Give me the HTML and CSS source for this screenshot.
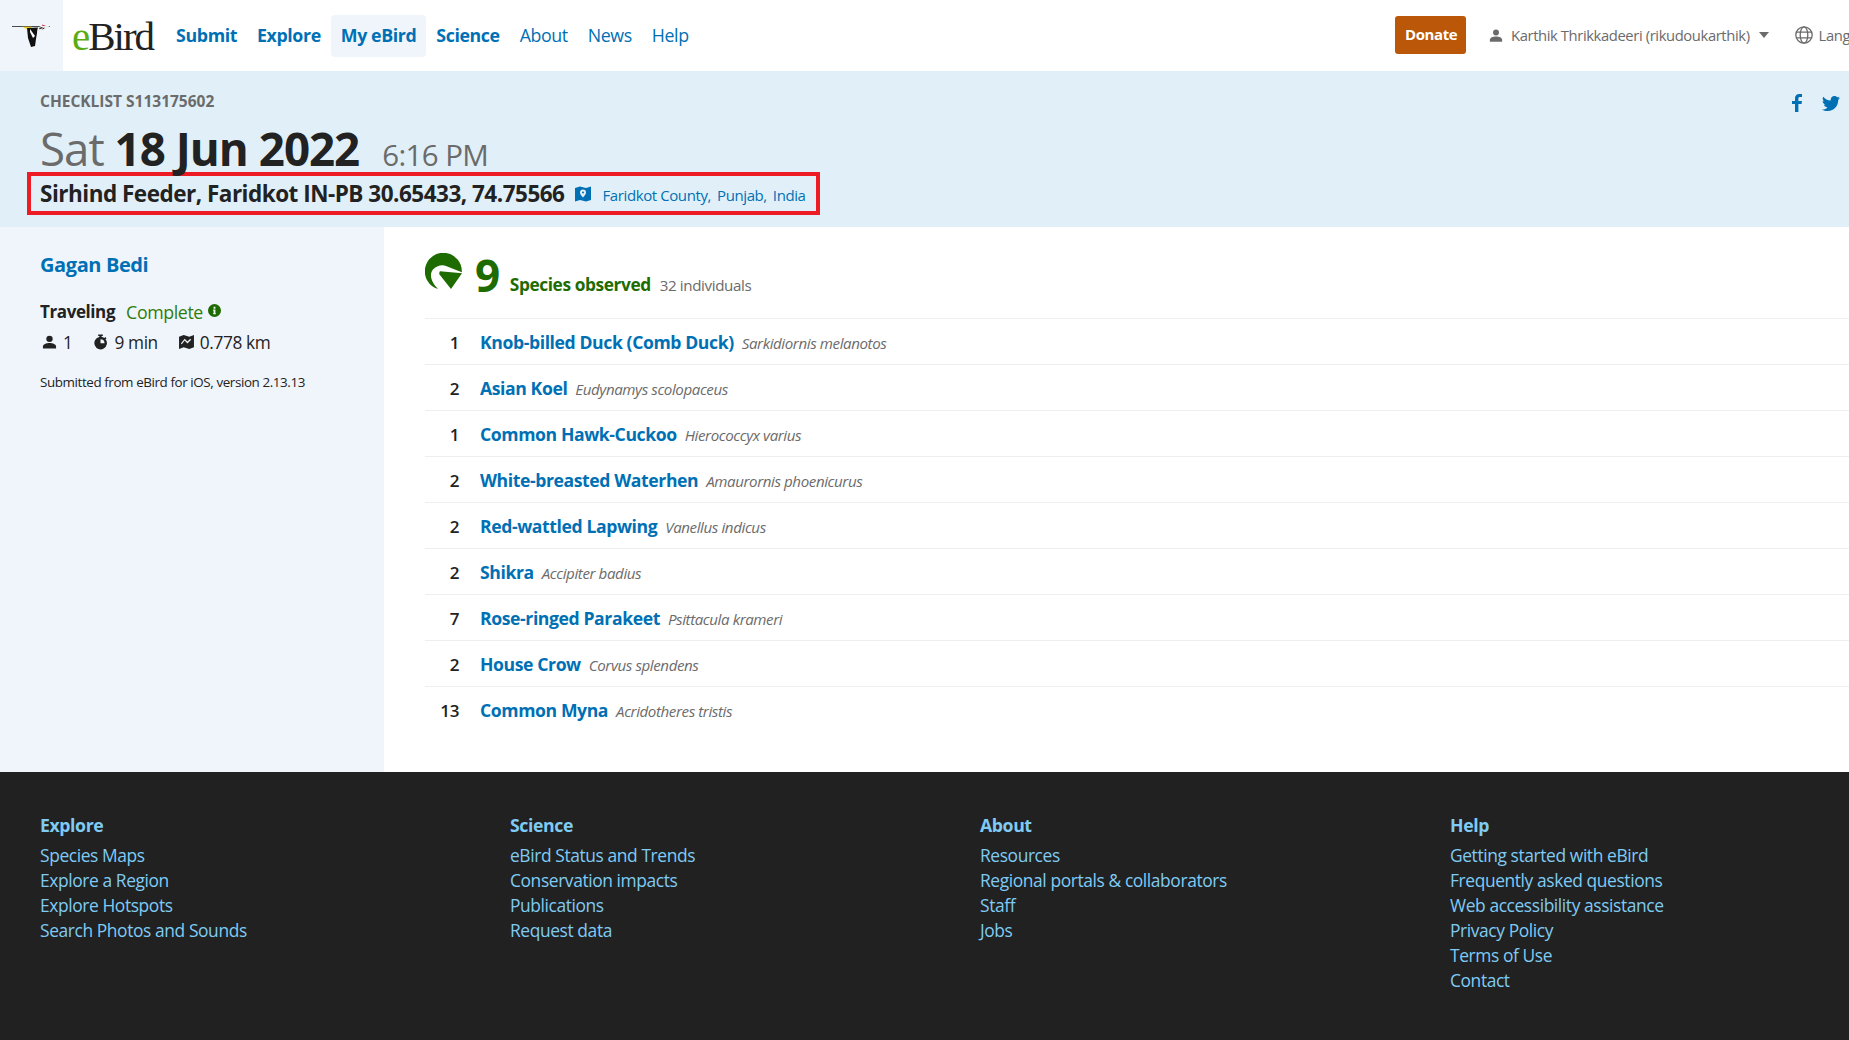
FILE: index.html
```html
<!DOCTYPE html>
<html lang="en">
<head>
    <meta charset="UTF-8">
    <meta name="viewport" content="width=device-width, initial-scale=1.0">
    <title>eBird Checklist - 18 Jun 2022 - Sirhind Feeder, Faridkot IN-PB</title>
    <link rel="stylesheet" href="styles.css">
</head>
<body>
    <header class="topbar">
        <a class="bird-box" href="#">
            <svg width="40" height="24" viewBox="0 0 40 24">
                <path d="M0 2h38v.8H0z" fill="#111"/>
                <path d="M10 2.800h10l-3 3.500z" fill="#f2cf1d"/>
                <path d="M15 4l11-.5L24 15l-1 7-4 1-3-9z" fill="#111"/>
                <path d="M18 5l5 7-2 2-3-6z" fill="#fff"/>
                <path d="M26 3.500L31 1l7 1.500-8 3.500-5 3z" fill="#eee"/>
                <path d="M27 4l3-1 .8 1-3 1.200zM30 5l2-1.500.8.500-2 1.500z" fill="#222"/>
                <path d="M30 .4l4 1.600-3.500 0z" fill="#c8202a"/>
            </svg>
        </a>
        <a class="wordmark" href="#"><span class="wordmark-e">e</span>Bird</a>
        <nav class="mainnav">
            <a class="strong" href="#">Submit</a>
            <a class="strong" href="#">Explore</a>
            <a class="strong current" href="#">My eBird</a>
            <a class="strong" href="#">Science</a>
            <a href="#">About</a>
            <a href="#">News</a>
            <a href="#">Help</a>
        </nav>
        <div class="usernav">
            <a class="donate" href="#">Donate</a>
            <a class="user" href="#">
                <svg class="ico-user" viewBox="0 0 16 14"><circle cx="8" cy="3.6" r="3.4"/><path d="M1 14v-2.2C1 9.4 4.4 8 8 8s7 1.4 7 3.8V14z"/></svg>
                Karthik Thrikkadeeri (rikudoukarthik)
                <svg class="ico-caret" viewBox="0 0 10 6"><path d="M0 0h10L5 6z"/></svg>
            </a>
            <a class="lang" href="#">
                <svg class="ico-globe" viewBox="0 0 18 18"><circle cx="9" cy="9" r="8.2"/><ellipse cx="9" cy="9" rx="3.8" ry="8.2"/><path d="M1.2 6.2h15.6M1.2 11.8h15.6"/></svg>
                Language
            </a>
        </div>
    </header>

    <section class="hero">
        <div class="share">
            <a href="#"><svg width="10" height="18" viewBox="0 0 10 18"><path d="M3 18V10H0V7h3V4.500C3 1.600 4.600 0 7.200 0H10v3H8c-1.100 0-1.600.5-1.600 1.600V7H10l-.5 3H6.400v8z"/></svg></a>
            <a href="#"><svg width="18" height="15" viewBox="0 0 18 15"><path d="M18 1.800c-.7.300-1.400.5-2.100.6.800-.5 1.300-1.200 1.600-2-.7.400-1.500.7-2.300.9C14.500.5 13.500 0 12.400 0 10.400 0 8.700 1.700 8.700 3.700c0 .3 0 .6.100.8C5.700 4.400 3 2.900 1.200.7.900 1.200.7 1.900.7 2.600c0 1.300.7 2.400 1.600 3-.6 0-1.200-.2-1.700-.5 0 1.800 1.300 3.300 3 3.600-.6.200-1.100.2-1.700.1.500 1.500 1.800 2.500 3.500 2.600C4 12.900 2.400 13.500.6 13.500H0C1.600 14.500 3.600 15 5.700 15c6.800 0 10.500-5.600 10.500-10.500v-.5c.7-.5 1.300-1.200 1.800-2.200z"/></svg></a>
        </div>
        <div class="checklist-id">Checklist S113175602</div>
        <h1 class="date">Sat <strong>18 Jun 2022</strong> <span class="time">6:16 PM</span></h1>
        <div class="location">
            <span class="location-name">Sirhind Feeder, Faridkot IN-PB 30.65433, 74.75566</span>
            <svg class="ico-map" viewBox="0 0 16 15"><path fill-rule="evenodd" d="M0 1.500L5 0l6 1.500L16 0v13.500L11 15l-6-1.500L0 15zM8 3a3 3 0 0 0-3 3c0 2 3 5 3 5s3-3 3-5a3 3 0 0 0-3-3zm0 2a1 1 0 1 1 0 2 1 1 0 0 1 0-2z"/></svg>
            <span class="regions"><a href="#">Faridkot County,</a><a href="#">Punjab,</a><a href="#">India</a></span>
        </div>
    </section>

    <div class="content">
        <aside class="sidebar">
            <a class="observer" href="#">Gagan Bedi</a>
            <div class="protocol"><strong>Traveling</strong><span class="complete">Complete</span>
                <svg class="ico-info" viewBox="0 0 14 14"><path fill-rule="evenodd" d="M7 0a7 7 0 1 1 0 14A7 7 0 0 1 7 0zM6 3v2h2V3zM5.500 6v1.300H6v2.700h-.5V11h3V10H8V6z"/></svg>
            </div>
            <div class="stats">
                <span><svg class="ico-stat" viewBox="0 0 16 14"><circle cx="8" cy="3.600" r="3.400"/><path d="M1 14v-2.200C1 9.400 4.400 8 8 8s7 1.400 7 3.800V14z"/></svg>1</span>
                <span><svg class="ico-stat ico-watch" viewBox="0 0 16 16"><path fill-rule="evenodd" d="M5.500 0h5v1.500H9.200v1.100a6.700 6.700 0 0 1 2.900 1.100l1-1 1.300 1.300-1 1A6.700 6.700 0 1 1 6.800 2.600V1.500H5.500zM8 5v4.300h4.300A4.300 4.300 0 0 0 8 5z"/></svg>9 min</span>
                <span><svg class="ico-stat" viewBox="0 0 16 15"><path fill-rule="evenodd" d="M0 2l5-2 6 2 5-2v13l-5 2-6-2-5 2zM3 10l3-4 3 3 4-4-1-1-3 3-3-3-4 5z"/></svg>0.778 km</span>
            </div>
            <p class="submitted">Submitted from eBird for iOS, version 2.13.13</p>
        </aside>

        <main class="observations">
            <div class="summary">
                <svg class="ico-species" viewBox="0 0 37 37">
                    <path d="M36.800 19.300A18.500 18.500 0 1 0 13 36C7 30 3.500 22 8 16.500 11 13 17 11 21 13z"/>
                    <path d="M15 18.300l22 2-11 15.700-11.500-14.500c-.5-1.500 0-2.500.5-3.200z"/>
                </svg>
                <span class="species-count">9</span>
                <span class="species-label">Species observed</span>
                <span class="individuals">32 individuals</span>
            </div>
            <ol class="species-list">
                <li><span class="count">1</span><a href="#">Knob-billed Duck (Comb Duck)</a><em>Sarkidiornis melanotos</em></li>
                <li><span class="count">2</span><a href="#">Asian Koel</a><em>Eudynamys scolopaceus</em></li>
                <li><span class="count">1</span><a href="#">Common Hawk-Cuckoo</a><em>Hierococcyx varius</em></li>
                <li><span class="count">2</span><a href="#">White-breasted Waterhen</a><em>Amaurornis phoenicurus</em></li>
                <li><span class="count">2</span><a href="#">Red-wattled Lapwing</a><em>Vanellus indicus</em></li>
                <li><span class="count">2</span><a href="#">Shikra</a><em>Accipiter badius</em></li>
                <li><span class="count">7</span><a href="#">Rose-ringed Parakeet</a><em>Psittacula krameri</em></li>
                <li><span class="count">2</span><a href="#">House Crow</a><em>Corvus splendens</em></li>
                <li><span class="count">13</span><a href="#">Common Myna</a><em>Acridotheres tristis</em></li>
            </ol>
        </main>
    </div>

    <footer class="footer">
        <div class="footer-col">
            <h3>Explore</h3>
            <a href="#">Species Maps</a>
            <a href="#">Explore a Region</a>
            <a href="#">Explore Hotspots</a>
            <a href="#">Search Photos and Sounds</a>
        </div>
        <div class="footer-col">
            <h3>Science</h3>
            <a href="#">eBird Status and Trends</a>
            <a href="#">Conservation impacts</a>
            <a href="#">Publications</a>
            <a href="#">Request data</a>
        </div>
        <div class="footer-col">
            <h3>About</h3>
            <a href="#">Resources</a>
            <a href="#">Regional portals &amp; collaborators</a>
            <a href="#">Staff</a>
            <a href="#">Jobs</a>
        </div>
        <div class="footer-col">
            <h3>Help</h3>
            <a href="#">Getting started with eBird</a>
            <a href="#">Frequently asked questions</a>
            <a href="#">Web accessibility assistance</a>
            <a href="#">Privacy Policy</a>
            <a href="#">Terms of Use</a>
            <a href="#">Contact</a>
        </div>
    </footer>
</body>
</html>
```

FILE: styles.css
```css
* {
    box-sizing: border-box;
}

html,
body {
    margin: 0;
    padding: 0;
    height: 1040px;
    overflow: hidden;
}

body {
    font-family: "Open Sans", "Noto Sans", sans-serif;
    font-size: 17px;
    letter-spacing: -0.4px;
    color: #222;
    background-color: #fff;
}

a {
    text-decoration: none;
    color: #0070b5;
}

/* top bar */
.topbar {
    display: flex;
    align-items: center;
    height: 71px;
    background-color: #fff;
}

.bird-box {
    display: flex;
    align-items: center;
    justify-content: center;
    width: 63px;
    height: 71px;
    background-color: #f0f5fb;
}

.wordmark {
    margin-left: 9px;
    font-family: "Liberation Serif", serif;
    font-size: 41px;
    letter-spacing: -2px;
    color: #222;
}

.wordmark-e {
    color: #5aab12;
}

.mainnav {
    display: flex;
    align-items: center;
    margin-left: 13px;
    height: 42px;
    font-size: 17.8px;
}

.mainnav a {
    display: flex;
    align-items: center;
    height: 42px;
    padding: 0 10px 2px;
    border-radius: 4px;
}

.mainnav .strong {
    font-weight: 700;
}

.mainnav .current {
    background-color: #f0f5fb;
}

.usernav {
    display: flex;
    align-items: center;
    margin-left: auto;
    margin-top: -1px;
    white-space: nowrap;
    overflow: hidden;
    width: 454px;
}

.donate {
    padding: 0 10px;
    height: 38px;
    line-height: 37px;
    width: 71px;
    text-align: center;
    border-radius: 3px;
    background-color: #bb5708;
    color: #fff;
    font-size: 15px;
    font-weight: 700;
}

.user,
.lang {
    display: flex;
    align-items: center;
    color: #6b6b6b;
    font-size: 14.8px;
}

.user {
    margin-left: 23px;
}

.ico-user {
    width: 14px;
    height: 13px;
    margin-right: 8px;
    fill: #6b6b6b;
}

.ico-caret {
    width: 10px;
    height: 6px;
    margin-left: 9px;
    fill: #6b6b6b;
}

.lang {
    margin-left: 26px;
}

.ico-globe {
    width: 18px;
    height: 18px;
    margin-right: 6px;
    fill: none;
    stroke: #6b6b6b;
    stroke-width: 1.300;
}

/* blue band */
.hero {
    position: relative;
    height: 156px;
    padding: 20px 0 0 40px;
    background-color: #e1f0f8;
}

.share {
    position: absolute;
    top: 23px;
    right: 9px;
    display: flex;
    align-items: center;
    gap: 20px;
}

.share svg {
    display: block;
    fill: #0070b5;
}

.checklist-id {
    font-size: 15.5px;
    line-height: 20px;
    font-weight: 700;
    letter-spacing: 0;
    color: #6b6b6b;
    text-transform: uppercase;
}

.date {
    margin: 14px 0 0;
    font-size: 45.7px;
    line-height: 46px;
    font-weight: 400;
    letter-spacing: -1px;
    color: #6b6b6b;
    white-space: nowrap;
}

.date strong {
    font-weight: 700;
    color: #222;
}

.time {
    margin-left: 12px;
    font-size: 29.5px;
    line-height: 1;
    letter-spacing: -0.6px;
}

/* the red box round the location */
.location {
    display: flex;
    align-items: center;
    width: 793px;
    height: 43px;
    margin: 1px 0 0 -13px;
    padding-left: 9px;
    border: 4px solid #ed1c24;
}

.location-name {
    font-size: 22.5px;
    font-weight: 700;
    letter-spacing: -0.5px;
    color: #222;
}

.ico-map {
    width: 16px;
    height: 16px;
    margin-left: 11px;
    fill: #0070b5;
}

.regions {
    display: flex;
    gap: 6px;
    margin-left: 11px;
    padding-top: 3px;
    font-size: 15px;
}

/* middle */
.content {
    display: flex;
    height: 545px;
}

.sidebar {
    width: 384px;
    padding: 24px 0 0 40px;
    background-color: #f0f5fb;
}

.observer {
    display: block;
    font-size: 20px;
    line-height: 27px;
    font-weight: 700;
}

.protocol {
    display: flex;
    align-items: center;
    margin-top: 21px;
    line-height: 26px;
}

.protocol strong {
    font-weight: 700;
}

.complete {
    margin-left: 11px;
    font-size: 17.8px;
    color: #2f7d0c;
}

.ico-info {
    width: 13px;
    height: 13px;
    margin: -3px 0 0 5px;
    fill: #1e6b00;
}

.stats {
    display: flex;
    gap: 19px;
    margin-top: 5px;
    font-size: 17.3px;
    line-height: 26px;
}

.stats span {
    display: flex;
    align-items: center;
}

.ico-stat {
    width: 15px;
    height: 14px;
    margin: -2px 6px 0 2px;
    fill: #222;
}

.ico-watch {
    height: 16px;
}

.submitted {
    margin: 17px 0 0;
    font-size: 13.4px;
    line-height: 18px;
}

.observations {
    flex: 1;
    padding: 26px 0 0 41px;
}

.summary {
    display: flex;
    align-items: flex-start;
    height: 65px;
}

.ico-species {
    width: 37px;
    height: 37px;
    fill: #1e6b00;
}

.species-count {
    margin-left: 13px;
    font-size: 44px;
    line-height: 44px;
    font-weight: 700;
    color: #1e6b00;
}

.species-label {
    margin: 20px 0 0 10px;
    font-size: 17.3px;
    font-weight: 700;
    line-height: 24px;
    color: #1e6b00;
}

.individuals {
    margin: 20px 0 0 9px;
    font-size: 15.2px;
    line-height: 24px;
    color: #6b6b6b;
}

.species-list {
    margin: 0;
    padding: 0;
    list-style: none;
}

.species-list li {
    display: flex;
    align-items: baseline;
    height: 46px;
    line-height: 47px;
    border-top: 1px solid #eee;
}

.species-list .count {
    width: 34px;
    text-align: right;
    font-weight: 600;
}

.species-list a {
    margin-left: 21px;
    font-size: 17.6px;
    font-weight: 700;
}

.species-list em {
    margin-left: 8px;
    font-size: 15.100px;
    color: #6b6b6b;
}

/* footer */
.footer {
    display: grid;
    grid-template-columns: repeat(4, 470px);
    height: 268px;
    padding: 41px 0 0 40px;
    font-size: 17.4px;
    background-color: #212121;
}

.footer-col {
    display: flex;
    flex-direction: column;
    align-items: flex-start;
}

.footer-col h3 {
    margin: 0 0 5px;
    font-size: 17.7px;
    line-height: 25px;
    font-weight: 700;
    color: #7fcbf4;
}

.footer-col a {
    line-height: 25px;
    color: #7fcbf4;
}
```
